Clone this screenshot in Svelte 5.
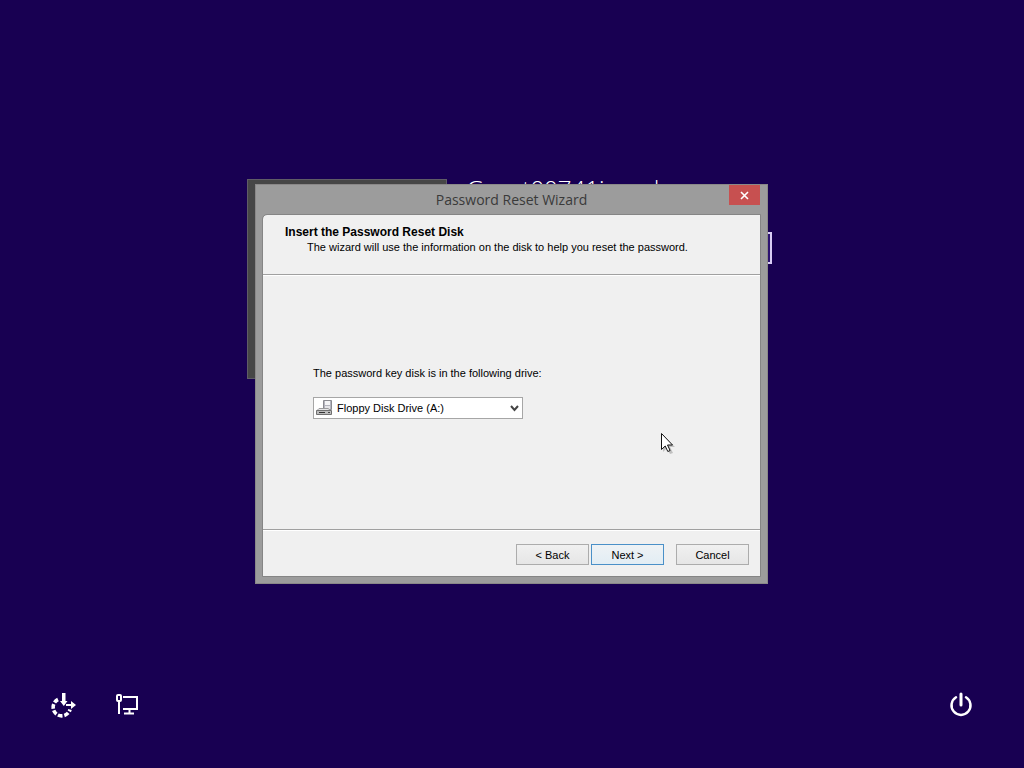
<script lang="ts">
  let drive = $state('a');
  let password = $state('');
</script>

<svelte:head>
  <title>Password Reset Wizard</title>
</svelte:head>

<div class="screen">
  <main class="signin">
    <div class="tile"></div>
    <div class="account">
      <h1>Guest00741iword</h1>
      <input type="password" aria-label="Password" bind:value={password} />
    </div>
  </main>

  <footer class="tray">
    <button aria-label="Ease of access">
      <svg width="28" height="28" viewBox="0 0 28 28">
        <path
          d="M9 8.5A8.600 8.600 0 1 0 21 18.500"
          fill="none"
          stroke="#fff"
          stroke-width="3.600"
          stroke-dasharray="4.600 1.800"
        />
        <path d="M13 2h3.500v8h2l-3.700 5L11 10h2z" fill="#fff" />
        <path d="M17 13h5v-3l5 4-5 4v-3h-5z" fill="#fff" />
      </svg>
    </button>
    <button aria-label="Network">
      <svg width="28" height="28" viewBox="0 0 28 28" fill="none" stroke="#fff" stroke-width="2">
        <path d="M10 6h14v12H10M16.500 18v4M11 22.500h10" />
        <rect x="4" y="4" width="4" height="6" rx="1" />
        <path d="M6 10v13" />
      </svg>
    </button>
    <button class="power" aria-label="Shut down">
      <svg width="28" height="28" viewBox="0 0 28 28" fill="none" stroke="#fff" stroke-linecap="round">
        <path d="M9 6.300a9.500 9.500 0 1 0 10 0" stroke-width="2.500" />
        <path d="M14 3v11" stroke-width="3" />
      </svg>
    </button>
  </footer>

  <div class="window" role="dialog" aria-labelledby="window-title">
    <header class="titlebar">
      <div class="title" id="window-title">Password Reset Wizard</div>
      <button class="close" aria-label="Close">
        <svg width="9" height="9" viewBox="0 0 9 9">
          <path d="M1 1l7 7M8 1L1 8" stroke="#fff" stroke-width="1.600" />
        </svg>
      </button>
    </header>

    <form class="wizard" onsubmit={(e) => e.preventDefault()}>
      <div class="heading">
        <h2>Insert the Password Reset Disk</h2>
        <p>The wizard will use the information on the disk to help you reset the password.</p>
      </div>

      <div class="page">
        <label for="drive">The password key disk is in the following drive:</label>
        <div class="combo">
          <select id="drive" bind:value={drive}>
            <option value="a">Floppy Disk Drive (A:)</option>
          </select>
          <svg class="floppy" width="16" height="16" viewBox="0 0 16 16">
            <path d="M7.500 .5h8v9h-8z" fill="#b4b4be" stroke="#8a8a90" />
            <path d="M9 1h5v4H9z" fill="#f4f4f6" />
            <path d="M9 6h5v3H9z" fill="#e4e4e8" />
            <path d="M3 8.500h9l3 2H1z" fill="#e6e6e8" stroke="#9a9a9c" />
            <path d="M.5 10.500h15v4H.5z" fill="#bcbcbc" stroke="#707070" />
            <path d="M3 12.500h6" stroke="#333" />
            <path d="M12 12.500h2" stroke="#444" />
          </svg>
          <svg class="chevron" width="9" height="7" viewBox="0 0 9 7">
            <path d="M1 1l3.500 4L8 1" fill="none" stroke="#444" stroke-width="2" />
          </svg>
        </div>
      </div>

      <div class="actions">
        <button type="button">&lt; Back</button>
        <button class="default" type="submit">Next &gt;</button>
        <button class="cancel" type="button">Cancel</button>
      </div>
    </form>
  </div>

  <svg class="cursor" width="16" height="24" viewBox="0 0 16 24">
    <path d="M3 3v17l4-4 3 6 3-1-3-6h5z" fill="#000" opacity="0.2" />
    <path d="M1.500 1.500v16l3.700-3.500 2.600 5.500 2.300-1-2.600-5.500h5z" fill="#fff" stroke="#111" />
  </svg>
</div>

<style>
  :global(body) {
    margin: 0;
    background: #180052;
  }

  .screen {
    position: relative;
    display: flex;
    flex-direction: column;
    min-height: 100vh;
    overflow: hidden;
    background: #180052;
    font-family: 'Liberation Sans', Arial, sans-serif;
    font-size: 11px;
    color: #000;
  }

  button {
    font: inherit;
    color: inherit;
    padding: 0;
  }

  .signin {
    flex: 1;
    display: flex;
    align-items: flex-start;
    justify-content: center;
    gap: 20px;
    padding: 179px 6px 0 0;
  }

  .tile {
    box-sizing: border-box;
    width: 200px;
    height: 200px;
    background: #464646;
    border: 1px solid #5f5c66;
  }

  .account {
    width: 305px;
  }

  h1 {
    margin: 0 0 33px;
    font-family: 'Open Sans', 'Noto Sans', sans-serif;
    font-size: 24px;
    font-weight: 300;
    line-height: 20px;
    color: #fff;
  }

  .account input {
    box-sizing: border-box;
    display: block;
    width: 100%;
    height: 32px;
    background: #2c1270;
    border: 2px solid #d9cdf5;
  }

  .tray {
    display: flex;
    gap: 36px;
    padding: 0 49px 49px;
  }

  .tray button {
    display: flex;
    border: 0;
    background: none;
  }

  .tray .power {
    margin-left: auto;
  }

  .window {
    position: absolute;
    top: calc(50% - 200px);
    left: calc(50% - 257px);
    box-sizing: border-box;
    width: 513px;
    padding: 0 7px 7px;
    background: #9c9c9c;
    border: 1px solid #8a8888;
  }

  .titlebar {
    display: grid;
    grid-template-columns: 31px 1fr 31px;
    align-items: start;
    height: 30px;
  }

  .title {
    grid-column: 2;
    font-family: 'Open Sans', 'Noto Sans', sans-serif;
    font-size: 14px;
    line-height: 30px;
    text-align: center;
    color: #3a3a3a;
  }

  .close {
    display: flex;
    align-items: center;
    justify-content: center;
    height: 20px;
    border: 0;
    background: #c75050;
  }

  .wizard {
    background: #f0f0f0;
    outline: 1px solid #858585;
    border-top-left-radius: 4px;
  }

  .heading {
    box-sizing: border-box;
    height: 60px;
    padding: 9px 22px 0;
    border-bottom: 1px solid #a0a0a0;
    box-shadow: 0 1px #fff;
  }

  h2 {
    margin: 0;
    font-size: 12px;
    line-height: 16px;
  }

  p {
    margin: 0;
    padding-left: 22px;
    line-height: 15px;
  }

  .page {
    box-sizing: border-box;
    height: 254px;
    padding: 90px 50px 0;
  }

  label {
    display: block;
    margin-bottom: 16px;
    line-height: 16px;
  }

  .combo {
    position: relative;
    width: 210px;
  }

  select {
    box-sizing: border-box;
    display: block;
    width: 100%;
    height: 22px;
    padding: 0 20px 0 23px;
    appearance: none;
    font: inherit;
    color: #000;
    background: #fff;
    border: 1px solid #a6a6a6;
    border-radius: 0;
  }

  .floppy {
    position: absolute;
    top: 3px;
    left: 3px;
    pointer-events: none;
  }

  .chevron {
    position: absolute;
    top: 8px;
    right: 4px;
    pointer-events: none;
  }

  .actions {
    display: flex;
    justify-content: flex-end;
    gap: 2px;
    padding: 14px 11px 11px;
    border-top: 1px solid #a0a0a0;
    box-shadow: inset 0 1px #fff;
  }

  .actions button {
    width: 73px;
    height: 21px;
    background: linear-gradient(#f0f0f0, #e6e6e6);
    border: 1px solid #acacac;
  }

  .actions .default {
    background: linear-gradient(#eef2f5, #e2edf4);
    border-color: #4a90c8;
  }

  .actions .cancel {
    margin-left: 10px;
  }

  .cursor {
    position: absolute;
    top: 432px;
    left: 660px;
    pointer-events: none;
  }
</style>
